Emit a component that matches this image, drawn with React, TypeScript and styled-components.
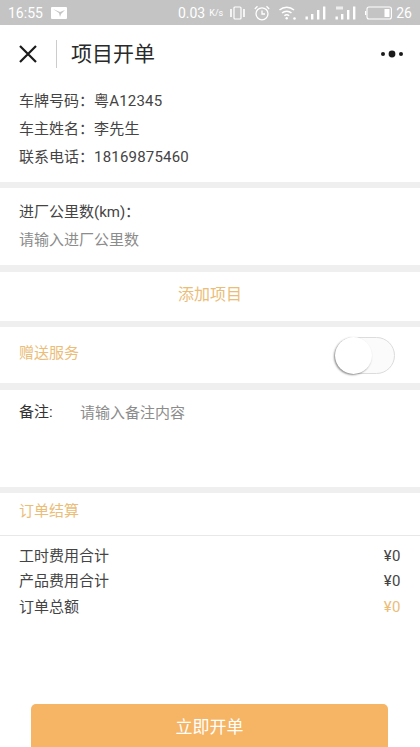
import React from "react";
import styled, { createGlobalStyle } from "styled-components";

const Global = createGlobalStyle`
  html, body { margin: 0; padding: 0; background: #fff; }
  body { font-family: "Roboto", "Noto Sans CJK SC", sans-serif; }
  * { box-sizing: border-box; }
`;
const Page = styled.div`
  width: 420px; height: 747px; overflow: hidden; display: flex; flex-direction: column; background: #fff;
`;
const StatusBar = styled.div`
  height: 25px; background: #c4c4c4; color: #fff; display: flex; align-items: center; padding: 0 8px; font-size: 14px; flex: none;
`;
const StatusTime = styled.span` width: 43px; `;
const StatusSpeed = styled.span` margin-left: auto; margin-right: 7px; display: flex; align-items: center; `;
const SpeedUnit = styled.span` font-size: 9px; margin-left: 4px; `;
const StatusIcons = styled.div` display: flex; align-items: center; gap: 9px; `;
const BatteryNum = styled.span` font-size: 14px; margin-left: -5px; `;
const Header = styled.div`
  height: 57px; display: flex; align-items: center; padding: 0 17px 0 19px; flex: none;
`;
const Sep = styled.div` width: 1px; height: 28px; background: #ccc; margin: 0 14px 0 19px; `;
const Title = styled.div` font-size: 21px; color: #2a2a2a; flex: 1; line-height: 28px; `;
const Info = styled.div` padding: 5px 19px 11px; flex: none; `;
const InfoRow = styled.div` height: 28px; line-height: 28px; font-size: 15px; color: #444; display: flex; `;
const InfoValue = styled.span` letter-spacing: 0.2px; `;
const Gap = styled.div<{ $h: number }>` height: ${p => p.$h}px; background: #efefef; flex: none; `;
const Mileage = styled.div` height: 77px; padding: 10px 19px 0; flex: none; `;
const FieldLabel = styled.div` height: 28px; line-height: 28px; font-size: 15px; color: #444; `;
const Placeholder = styled.div` height: 28px; line-height: 28px; font-size: 15px; color: #8c8c8c; `;
const AddRow = styled.div` height: 49px; line-height: 46px; text-align: center; color: #ebbd78; font-size: 16px; flex: none; `;
const GiftRow = styled.div` height: 56px; display: flex; align-items: center; justify-content: space-between; padding: 0 25px 0 19px; color: #ebbd78; font-size: 15px; flex: none; `;
const GiftLabel = styled.span` line-height: 22px; padding-bottom: 5px; `;
const Toggle = styled.div` position: relative; width: 60px; height: 37px; border: 1px solid #dcdcdc; border-radius: 19px; background: #fbfbfb; `;
const Knob = styled.div` position: absolute; left: -1px; top: -1px; width: 37px; height: 37px; border-radius: 50%; background: #fff; box-shadow: -1px 1px 2px rgba(0,0,0,.45); `;
const Remark = styled.div` height: 97px; display: flex; padding: 12px 19px 0; font-size: 15px; flex: none; `;
const RemarkLabel = styled.div` width: 61px; color: #333; line-height: 20px; `;
const RemarkText = styled.div` color: #8c8c8c; line-height: 22px; `;
const SettleHead = styled.div` height: 43px; line-height: 36px; padding: 0 19px; color: #ebbd78; font-size: 15px; border-bottom: 1px solid #e8e8e8; flex: none; `;
const Rows = styled.div` padding-top: 7.5px; flex: 1; `;
const Row = styled.div` height: 25.5px; line-height: 25.5px; display: flex; justify-content: space-between; padding: 0 19px; font-size: 15px; color: #444; `;
const Amount = styled.span<{ $accent?: boolean }>` color: ${p => (p.$accent ? "#ebbd78" : "#444")}; letter-spacing: 0.5px; `;
const Footer = styled.div` padding: 0 32px 0 31px; flex: none; `;
const Submit = styled.div` height: 43px; line-height: 46px; text-align: center; background: #f6b465; border-radius: 5px 5px 0 0; color: #fff; font-size: 17px; `;

const Close = () => (
  <svg width="18" height="18" viewBox="0 0 18 18"><path d="M1 1 L17 17 M17 1 L1 17" stroke="#1a1a1a" strokeWidth="2.2" fill="none" /></svg>
);
const More = () => (
  <svg width="22" height="8" viewBox="0 0 22 8"><circle cx="2" cy="4" r="2" fill="#1a1a1a" /><circle cx="11" cy="4" r="3.4" fill="#1a1a1a" /><circle cx="20" cy="4" r="2" fill="#1a1a1a" /></svg>
);
const Mail = () => (
  <svg width="16" height="12" viewBox="0 0 16 12"><rect width="16" height="12" rx="1" fill="#fff" /><path d="M2 2 L9 5 L14 3 L10 7 L9 10 L8 6 Z" fill="#c4c4c4" /></svg>
);
const Vibrate = () => (
  <svg width="15" height="14" viewBox="0 0 15 14" fill="none" stroke="#fff" strokeWidth="1.2"><rect x="4" y="1" width="7" height="12" rx="1" /><path d="M1 3v8M14 3v8" strokeWidth="1.6" /></svg>
);
const Alarm = () => (
  <svg width="16" height="16" viewBox="0 0 16 16" fill="none" stroke="#fff" strokeWidth="1.3"><circle cx="8" cy="8.8" r="6" /><path d="M8 5.5v3.5h3M0.8 4L3.5 1.3M15.2 4L12.5 1.3" /></svg>
);
const Wifi = () => (
  <svg width="17" height="15" viewBox="0 0 17 15" fill="none" stroke="#fff" strokeWidth="1.5"><path d="M0.5 5a11 11 0 0 1 14.5 0M3 8a7 7 0 0 1 9.5 0M5.4 10.8a3.4 3.4 0 0 1 4.7 0" /><circle cx="7.7" cy="13.3" r="1.2" fill="#fff" stroke="none" /><circle cx="15.5" cy="13.5" r="1.3" fill="#fff" stroke="none" /></svg>
);
const Signal = ({ g }: { g?: boolean }) => (
  <svg width="21" height="15" viewBox="0 0 21 15" fill="#fff">
    <rect x="0.5" y="11.5" width="2.4" height="3" /><rect x="6" y="9" width="2.4" height="5.5" /><rect x="12" y="5" width="2.4" height="9.5" /><rect x="18" y="1.5" width="2.4" height="13" />
    {g && <rect x="1" y="1.5" width="7" height="3" opacity="0.7" />}
  </svg>
);
const Battery = () => (
  <svg width="27" height="14" viewBox="0 0 27 14"><rect x="2" y="1" width="24.4" height="12" rx="2" fill="none" stroke="#fff" strokeWidth="1.1" /><rect x="19.5" y="3" width="5" height="8" fill="#fff" /><rect x="0" y="5" width="1.2" height="4" fill="#fff" /></svg>
);

export default function App() {
  return (
    <Page>
      <Global />
      <StatusBar>
        <StatusTime>16:55</StatusTime>
        <Mail />
        <StatusSpeed>0.03<SpeedUnit>K/s</SpeedUnit></StatusSpeed>
        <StatusIcons>
          <Vibrate /><Alarm /><Wifi /><Signal /><Signal g /><Battery />
          <BatteryNum>26</BatteryNum>
        </StatusIcons>
      </StatusBar>
      <Header>
        <Close />
        <Sep />
        <Title>项目开单</Title>
        <More />
      </Header>
      <Info>
        <InfoRow>车牌号码：<InfoValue>粤A12345</InfoValue></InfoRow>
        <InfoRow>车主姓名：<InfoValue>李先生</InfoValue></InfoRow>
        <InfoRow>联系电话：<InfoValue>18169875460</InfoValue></InfoRow>
      </Info>
      <Gap $h={6} />
      <Mileage>
        <FieldLabel>进厂公里数(km)：</FieldLabel>
        <Placeholder>请输入进厂公里数</Placeholder>
      </Mileage>
      <Gap $h={7} />
      <AddRow>添加项目</AddRow>
      <Gap $h={6} />
      <GiftRow>
        <GiftLabel>赠送服务</GiftLabel>
        <Toggle><Knob /></Toggle>
      </GiftRow>
      <Gap $h={7} />
      <Remark>
        <RemarkLabel>备注:</RemarkLabel>
        <RemarkText>请输入备注内容</RemarkText>
      </Remark>
      <Gap $h={6} />
      <SettleHead>订单结算</SettleHead>
      <Rows>
        <Row>工时费用合计<Amount>¥0</Amount></Row>
        <Row>产品费用合计<Amount>¥0</Amount></Row>
        <Row>订单总额<Amount $accent>¥0</Amount></Row>
      </Rows>
      <Footer><Submit>立即开单</Submit></Footer>
    </Page>
  );
}
